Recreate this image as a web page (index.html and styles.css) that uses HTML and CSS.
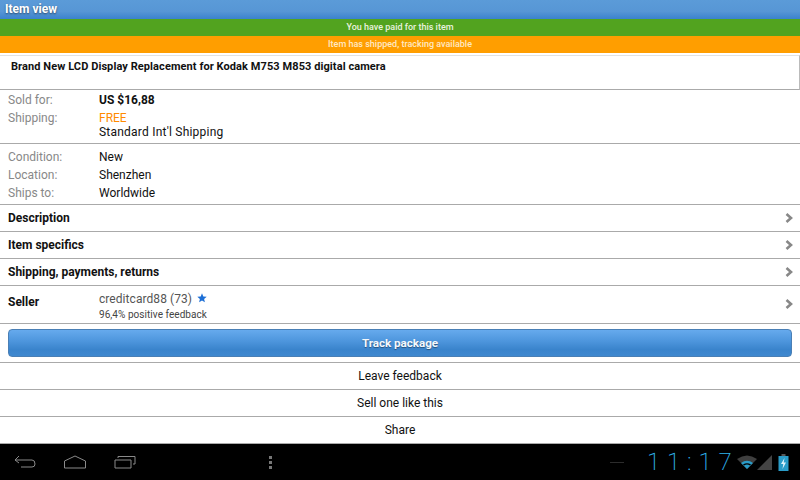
FILE: index.html
```html
<!DOCTYPE html>
<html lang="en">
<head>
  <meta charset="UTF-8" />
  <meta name="viewport" content="width=device-width, initial-scale=1.0" />
  <title>Item view</title>
  <link rel="stylesheet" href="styles.css">
</head>
<body>
  <div class="screen">
    <div class="titlebar">Item view</div>
    <div class="notice paid">You have paid for this item</div>
    <div class="notice shipped">Item has shipped, tracking available</div>

    <div class="item-title">Brand New LCD Display Replacement for Kodak M753 M853 digital camera</div>

    <div class="details price">
      <div class="row"><span class="label">Sold for:</span><span class="value strong">US $16,88</span></div>
      <div class="row shipping"><span class="label">Shipping:</span>
        <span class="value"><span class="free">FREE</span><br><span class="method">Standard Int'l Shipping</span></span>
      </div>
    </div>

    <div class="details info">
      <div class="row"><span class="label">Condition:</span><span class="value">New</span></div>
      <div class="row"><span class="label">Location:</span><span class="value">Shenzhen</span></div>
      <div class="row"><span class="label">Ships to:</span><span class="value">Worldwide</span></div>
    </div>

    <div class="link-row">Description
      <svg class="chevron" viewBox="0 0 8 10"><path d="M1.5 1 L6 5 L1.5 9" /></svg>
    </div>
    <div class="link-row">Item specifics
      <svg class="chevron" viewBox="0 0 8 10"><path d="M1.5 1 L6 5 L1.5 9" /></svg>
    </div>
    <div class="link-row">Shipping, payments, returns
      <svg class="chevron" viewBox="0 0 8 10"><path d="M1.5 1 L6 5 L1.5 9" /></svg>
    </div>

    <div class="seller-row">
      <span class="seller-label">Seller</span>
      <div class="seller-info">
        <div class="seller-name">creditcard88 (73)
          <svg class="star" viewBox="0 0 10 10"><path d="M5 0.3 L6.3 3.5 L9.7 3.7 L7.1 5.9 L7.9 9.3 L5 7.5 L2.1 9.3 L2.9 5.9 L0.3 3.7 L3.7 3.5 Z" /></svg>
        </div>
        <div class="seller-feedback">96,4% positive feedback</div>
      </div>
      <svg class="chevron seller-chevron" viewBox="0 0 8 10"><path d="M1.5 1 L6 5 L1.5 9" /></svg>
    </div>

    <div class="track-wrap">
      <button class="track-btn">Track package</button>
    </div>

    <div class="action">Leave feedback</div>
    <div class="action">Sell one like this</div>
    <div class="action">Share</div>

    <div class="navbar">
      <div class="nav-buttons">
        <svg class="nav-back" width="22" height="14" viewBox="0 0 22 14"><path d="M5 1 L1 5 L5 8 M1 5 H18 Q21 5 21 9 Q21 12 18 12 H7" /></svg>
        <svg class="nav-home" width="24" height="14" viewBox="0 0 24 14"><path d="M1.5 6 L12 1 L22.5 6 V13 H1.5 Z" /></svg>
        <svg class="nav-recent" width="22" height="14" viewBox="0 0 22 14"><path d="M1 5 H17 V13 H1 Z M4 3 V1.5 H21 V9 H19" /></svg>
      </div>
      <div class="nav-menu"><i></i><i></i><i></i></div>
      <div class="status">
        <span class="dash"></span>
        <span class="clock">11:17</span>
        <svg class="wifi" width="20" height="14" viewBox="0 0 20 14">
          <path d="M0 4 Q10 -3 20 4 L10 14 Z" fill="#3f3f3f" />
          <path d="M4 8 Q10 3.5 16 8 L10 14 Z" fill="#2a9cc8" />
          <path d="M6 9.5 Q10 7 14 9.5 L13 10.5 Q10 8.5 7 10.5 Z" fill="#000" />
        </svg>
        <svg class="signal" width="16" height="15" viewBox="0 0 16 15"><path d="M15 0 V15 H0 Z" fill="#444" /></svg>
        <svg class="battery" width="11" height="17" viewBox="0 0 11 17">
          <path d="M3.5 0 H7.5 V2 H3.5 Z" fill="#555" />
          <path d="M0.5 2 H10.5 V17 H0.5 Z" fill="#2a9cc8" />
          <path d="M6.5 4 L3 10 H5.3 L4.5 15 L8 8.5 H5.7 Z" fill="#dff3fb" />
        </svg>
      </div>
    </div>
  </div>
</body>
</html>
```

FILE: styles.css
```css
* {
  box-sizing: border-box;
}
html, body {
  margin: 0;
  padding: 0;
}
body {
  width: 800px;
  height: 480px;
  overflow: hidden;
  background: #fff;
  color: #111;
  font-family: Roboto, "Liberation Sans", sans-serif;
}
.screen {
  display: flex;
  flex-direction: column;
  height: 480px;
}
.titlebar {
  height: 19px;
  line-height: 19px;
  padding-left: 5px;
  color: #fff;
  font-size: 12px;
  font-weight: bold;
  text-shadow: 0 1px 2px rgba(0, 0, 0, 0.5);
  background: linear-gradient(#5b9bd8 0, #5796d5 60%, #3a82cd 100%);
}
.notice {
  height: 17px;
  line-height: 17px;
  text-align: center;
  color: #e9f2df;
  font-size: 9px;
  font-weight: 500;
}
.paid {
  background: #52a31f;
}
.shipped {
  background: #ff9e00;
  color: #ffe9c4;
}
.item-title {
  height: 35px;
  margin-top: 2px;
  padding: 3px 0 0 11px;
  font-size: 11px;
  font-weight: bold;
  letter-spacing: 0.08px;
  line-height: 16px;
  border-top: 1px solid #e2e2e2;
  border-right: 1px solid #bbb;
  border-bottom: 1px solid #aaa;
}
.details {
  padding: 0 8px;
  font-size: 12px;
  border-bottom: 1px solid #aaa;
}
.price {
  height: 54px;
  padding-top: 1px;
}
.info {
  height: 61px;
  padding-top: 4px;
}
.row {
  display: flex;
  height: 18px;
  line-height: 18px;
}
.row.shipping {
  height: auto;
  line-height: 14px;
  padding-top: 2px;
}
.label {
  width: 91px;
  color: #888;
}
.strong {
  font-weight: bold;
}
.free {
  color: #ff8a00;
}
.method {
  letter-spacing: 0.22px;
}
.link-row {
  display: flex;
  align-items: center;
  justify-content: space-between;
  height: 27px;
  padding: 0 7px 0 8px;
  font-size: 12px;
  font-weight: bold;
  border-bottom: 1px solid #aaa;
}
.chevron {
  width: 8px;
  height: 10px;
  fill: none;
  stroke: #888;
  stroke-width: 2.6;
}
.seller-chevron {
  margin-top: -2px;
}
.seller-row {
  display: flex;
  align-items: center;
  height: 38px;
  padding: 0 7px 0 8px;
  border-bottom: 1px solid #aaa;
}
.seller-label {
  width: 91px;
  font-size: 12px;
  font-weight: bold;
  margin-top: -6px;
}
.seller-info {
  flex: 1;
  padding-top: 3px;
}
.seller-name {
  font-size: 12px;
  letter-spacing: 0.06px;
  line-height: 16px;
  color: #555;
}
.star {
  width: 10px;
  height: 10px;
  margin-left: 2px;
  fill: #1d6fd6;
}
.seller-feedback {
  font-size: 10px;
  letter-spacing: 0.05px;
  line-height: 14px;
  margin-top: 1px;
  color: #444;
}
.track-wrap {
  height: 39px;
  padding: 5px 8px 0;
  border-bottom: 1px solid #aaa;
}
.track-btn {
  display: block;
  width: 100%;
  height: 28px;
  border: 1px solid #4a7fb5;
  border-radius: 4px;
  color: #f4f8fc;
  font-family: inherit;
  font-size: 11.6px;
  font-weight: bold;
  text-shadow: 0 1px 1px rgba(0, 0, 0, 0.4);
  background: linear-gradient(#66aaed 0, #4f97de 40%, #3a84cc 75%, #3f88cf 100%);
}
.action {
  height: 27px;
  line-height: 26px;
  text-align: center;
  font-size: 12px;
  border-bottom: 1px solid #aaa;
}
.navbar {
  display: flex;
  align-items: center;
  flex: 1;
  background: #000;
}
.nav-buttons {
  display: flex;
  align-items: center;
  gap: 27px;
  padding-left: 14px;
}
.nav-buttons svg {
  fill: none;
  stroke: #8a8a8a;
  stroke-width: 1;
}
.nav-menu {
  display: flex;
  flex-direction: column;
  gap: 2px;
  margin-left: 133px;
}
.nav-menu i {
  display: block;
  width: 3px;
  height: 3px;
  background: #777;
}
.status {
  display: flex;
  align-items: center;
  margin-left: auto;
  padding-right: 11px;
}
.dash {
  width: 14px;
  height: 1px;
  margin-right: 23px;
  background: #2c2c2c;
}
.clock {
  width: 90px;
  color: #2fb4ee;
  font-size: 24px;
  font-weight: 200;
  letter-spacing: 6.8px;
}
.signal {
  margin: 0 5px 0 0;
}
```
